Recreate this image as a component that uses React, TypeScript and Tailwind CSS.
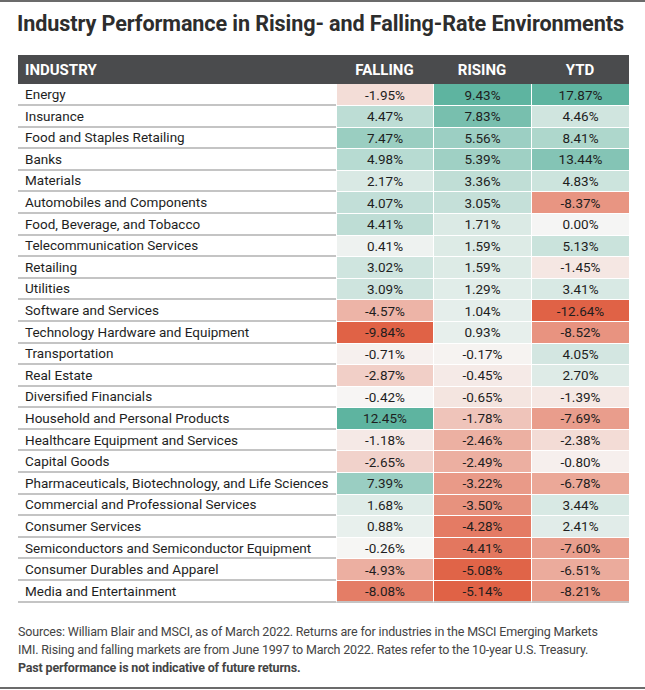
import React from "react";

type Row = { name: string; falling: number; rising: number; ytd: number };

const ROWS: Row[] = [
  { name: "Energy", falling: -1.95, rising: 9.43, ytd: 17.87 },
  { name: "Insurance", falling: 4.47, rising: 7.83, ytd: 4.46 },
  { name: "Food and Staples Retailing", falling: 7.47, rising: 5.56, ytd: 8.41 },
  { name: "Banks", falling: 4.98, rising: 5.39, ytd: 13.44 },
  { name: "Materials", falling: 2.17, rising: 3.36, ytd: 4.83 },
  { name: "Automobiles and Components", falling: 4.07, rising: 3.05, ytd: -8.37 },
  { name: "Food, Beverage, and Tobacco", falling: 4.41, rising: 1.71, ytd: 0.0 },
  { name: "Telecommunication Services", falling: 0.41, rising: 1.59, ytd: 5.13 },
  { name: "Retailing", falling: 3.02, rising: 1.59, ytd: -1.45 },
  { name: "Utilities", falling: 3.09, rising: 1.29, ytd: 3.41 },
  { name: "Software and Services", falling: -4.57, rising: 1.04, ytd: -12.64 },
  { name: "Technology Hardware and Equipment", falling: -9.84, rising: 0.93, ytd: -8.52 },
  { name: "Transportation", falling: -0.71, rising: -0.17, ytd: 4.05 },
  { name: "Real Estate", falling: -2.87, rising: -0.45, ytd: 2.7 },
  { name: "Diversified Financials", falling: -0.42, rising: -0.65, ytd: -1.39 },
  { name: "Household and Personal Products", falling: 12.45, rising: -1.78, ytd: -7.69 },
  { name: "Healthcare Equipment and  Services", falling: -1.18, rising: -2.46, ytd: -2.38 },
  { name: "Capital Goods", falling: -2.65, rising: -2.49, ytd: -0.8 },
  { name: "Pharmaceuticals, Biotechnology, and Life Sciences", falling: 7.39, rising: -3.22, ytd: -6.78 },
  { name: "Commercial and  Professional Services", falling: 1.68, rising: -3.5, ytd: 3.44 },
  { name: "Consumer Services", falling: 0.88, rising: -4.28, ytd: 2.41 },
  { name: "Semiconductors and Semiconductor Equipment", falling: -0.26, rising: -4.41, ytd: -7.6 },
  { name: "Consumer Durables and Apparel", falling: -4.93, rising: -5.08, ytd: -6.51 },
  { name: "Media and Entertainment", falling: -8.08, rising: -5.14, ytd: -8.21 },
];

const MID = [247, 246, 245];
const GREEN = [94, 180, 160];
const RED = [224, 98, 70];

// per-column colour scale, centred a little below zero like the source sheet
function cellColor(v: number, key: "falling" | "rising" | "ytd", mid: number) {
  const vals = ROWS.map((r) => r[key]);
  const max = Math.max(...vals);
  const min = Math.min(...vals);
  let t: number;
  let to: number[];
  if (v >= mid) {
    t = (v - mid) / (max - mid);
    to = GREEN;
  } else {
    t = (mid - v) / (mid - min);
    to = RED;
  }
  const c = MID.map((m, i) => Math.round(m + (to[i] - m) * t));
  return `rgb(${c[0]}, ${c[1]}, ${c[2]})`;
}

const fmt = (v: number) => `${v.toFixed(2)}%`;

export default function App() {
  return (
    <div
      className="w-[645px] h-[690px] bg-white border-t-2 border-[#6b6b6b] flex flex-col"
      style={{ fontFamily: "Roboto, 'Liberation Sans', sans-serif" }}
    >
      <div className="pl-[17px] pt-[6px] text-[21.6px] font-bold text-[#2d2d2d] whitespace-nowrap tracking-[-0.1px]">
        Industry Performance in Rising- and Falling-Rate Environments
      </div>

      <div className="mx-[18px] mt-[15px] w-[611px]">
        <div className="flex h-[29px] bg-[#4a4b4d] text-white font-bold text-[15px] items-center">
          <div className="w-[318px] pl-[7px]">INDUSTRY</div>
          <div className="w-[97px] text-center">FALLING</div>
          <div className="w-[98px] text-center">RISING</div>
          <div className="w-[98px] text-center">YTD</div>
        </div>
        {ROWS.map((r, i) => {
          const last = i === ROWS.length - 1;
          return (
            <div key={r.name} className="flex h-[21.6px] text-[13.5px] text-[#1e1e1e]">
              <div className="w-[318px] pl-[7px] flex items-center border-b-2 border-[#c4c4c4] whitespace-nowrap">
                {r.name}
              </div>
              {(["falling", "rising", "ytd"] as const).map((k, j) => (
                <div
                  key={k}
                  className={`${j === 0 ? "w-[97px]" : "w-[98px]"} border-l border-white ${
                    last ? "border-b-2 border-b-[#c4c4c4]" : "border-b border-b-white"
                  } flex items-center justify-center`}
                  style={{
                    backgroundColor: cellColor(r[k], k, k === "falling" ? -0.35 : k === "rising" ? -0.05 : -0.2),
                  }}
                >
                  {fmt(r[k])}
                </div>
              ))}
            </div>
          );
        })}
      </div>

      <div className="mt-[20px] pl-[18px] text-[12.5px] leading-[18px] text-[#444] tracking-[-0.17px] whitespace-nowrap">
        <div>
          Sources: William Blair and MSCI, as of March 2022. Returns are for industries in the MSCI Emerging Markets
        </div>
        <div>
          IMI. Rising and falling markets are from June 1997 to March 2022. Rates refer to the 10-year U.S. Treasury.
        </div>
        <div className="font-bold">Past performance is not indicative of future returns.</div>
      </div>

      <div className="mt-auto mb-[1px] border-b-2 border-[#6b6b6b]" />
    </div>
  );
}
